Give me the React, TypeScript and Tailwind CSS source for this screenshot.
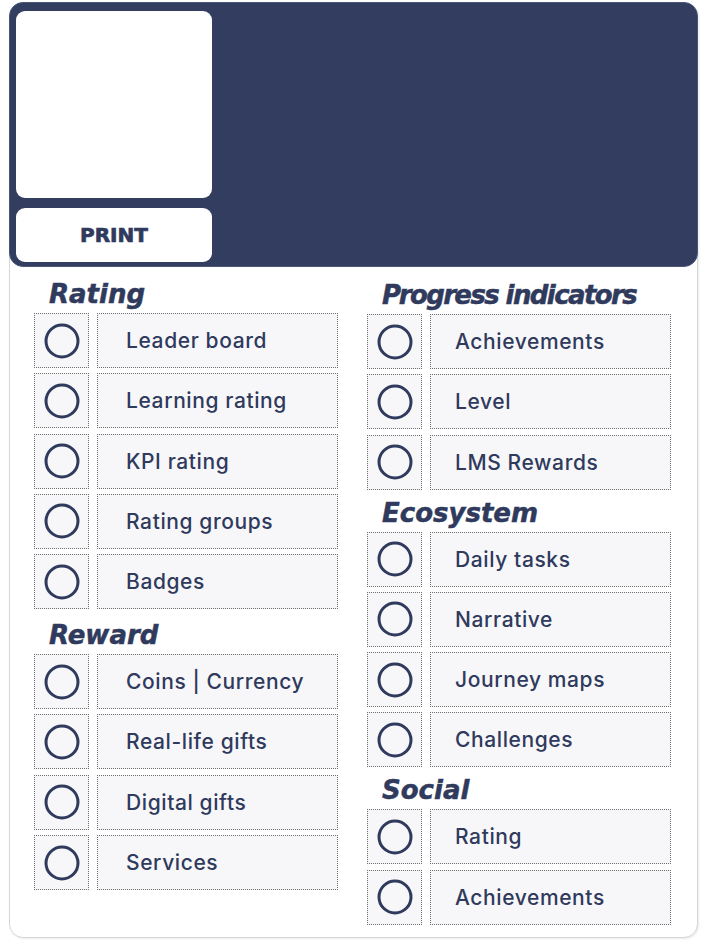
import React from 'react';

const font = { fontFamily: '"DejaVu Sans", "Liberation Sans", sans-serif' };

type Section = { title: string; titleClass: string; headClass: string; items: string[] };

const leftSections: Section[] = [
  { title: 'Rating', titleClass: '', headClass: 'h-[46px]', items: ['Leader board', 'Learning rating', 'KPI rating', 'Rating groups', 'Badges'] },
  { title: 'Reward', titleClass: '', headClass: 'h-[45px]', items: ['Coins | Currency', 'Real-life gifts', 'Digital gifts', 'Services'] },
];

const rightSections: Section[] = [
  { title: 'Progress indicators', titleClass: 'tracking-[-1.6px]', headClass: 'h-[47px]', items: ['Achievements', 'Level', 'LMS Rewards'] },
  { title: 'Ecosystem', titleClass: '', headClass: 'h-[42px]', items: ['Daily tasks', 'Narrative', 'Journey maps', 'Challenges'] },
  { title: 'Social', titleClass: '', headClass: 'h-[42px]', items: ['Rating', 'Achievements'] },
];

function Row({ label, labelPad }: { label: string; labelPad: string }) {
  return (
    <div className="flex h-[55px] gap-[8px]">
      <div className="w-[55px] shrink-0 flex items-center justify-center bg-[#f7f7f9] border border-dotted border-[#6e6e6e]">
        <svg width="36" height="36" viewBox="0 0 36 36">
          <circle cx="18" cy="18" r="16" fill="none" stroke="#2f3a5d" strokeWidth="3" />
        </svg>
      </div>
      <div className={`flex-1 flex items-center bg-[#f7f7f9] border border-dotted border-[#6e6e6e] ${labelPad}`}>
        <span className="font-['Inter',sans-serif] text-[21px] font-medium leading-none text-[#2f3a5d] tracking-[0.6px]">{label}</span>
      </div>
    </div>
  );
}

function Column({ sections, labelPad }: { sections: Section[]; labelPad: string }) {
  return (
    <div className="w-[304px] flex flex-col">
      {sections.map((s) => (
        <div key={s.title} className="flex flex-col">
          <div className={`${s.headClass} flex items-end pl-[15px] pb-[4px]`}>
            <h2 className={`text-[26px] leading-[30px] font-bold italic text-[#2f3a5d] [-webkit-text-stroke:0.5px_#2f3a5d] ${s.titleClass}`}>{s.title}</h2>
          </div>
          <div className="flex flex-col gap-[5.3px]">
            {s.items.map((it) => (
              <Row key={it} label={it} labelPad={labelPad} />
            ))}
          </div>
        </div>
      ))}
    </div>
  );
}

export default function App() {
  return (
    <div className="w-[705px] h-[940px] bg-white pt-[2px] pl-[9px]" style={font}>
      <div className="w-[689px] h-[936px] rounded-[14px] border border-[#d4d7dc] bg-white shadow-[1px_1px_2px_rgba(0,0,0,0.08)] flex flex-col">
        {/* Header */}
        <div className="h-[265px] rounded-[14px] bg-[#323d60] border border-[#4a5678] -mx-px -mt-px pl-[6px] pt-[8px] flex flex-col gap-[10px]">
          <div className="w-[196px] h-[187px] bg-white rounded-[9px]" />
          <div className="w-[196px] h-[54px] bg-white rounded-[9px] flex items-center justify-center">
            <span className="text-[20px] font-bold text-[#2f3a5d] [-webkit-text-stroke:0.7px_#2f3a5d]">PRINT</span>
          </div>
        </div>

        {/* Body */}
        <div className="flex pl-[24px] gap-[29px]">
          <Column sections={leftSections} labelPad="pl-[28px]" />
          <Column sections={rightSections} labelPad="pl-[24px]" />
        </div>
      </div>
    </div>
  );
}
